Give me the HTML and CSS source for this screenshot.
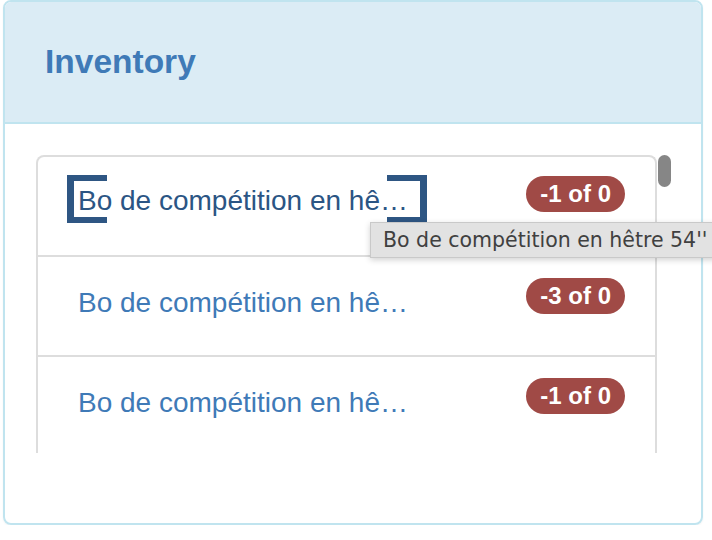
FILE: index.html
```html
<!DOCTYPE html>
<html lang="en">
<head>
    <meta charset="UTF-8">
    <meta name="viewport" content="width=device-width, initial-scale=1.0">
    <title>Inventory</title>
    <link rel="stylesheet" href="styles.css">
</head>
<body>
    <div class="panel">
        <div class="panel-heading">
            <h3 class="panel-title">Inventory</h3>
        </div>
        <div class="panel-body">
            <div class="scroller">
                <div class="list-group">
                    <div class="list-item">
                        <a class="item-name focused" href="#"><span class="label">Bo de compétition en hêtre 54''</span></a>
                        <span class="badge">-1 of 0</span>
                    </div>
                    <div class="list-item">
                        <a class="item-name" href="#"><span class="label">Bo de compétition en hêtre 54''</span></a>
                        <span class="badge">-3 of 0</span>
                    </div>
                    <div class="list-item">
                        <a class="item-name" href="#"><span class="label">Bo de compétition en hêtre 54''</span></a>
                        <span class="badge">-1 of 0</span>
                    </div>
                </div>
                <div class="track">
                    <div class="thumb"></div>
                </div>
            </div>
        </div>
        <div class="tooltip">Bo de compétition en hêtre 54''</div>
    </div>
</body>
</html>
```

FILE: styles.css
```css
html, body {
    overflow: hidden;
}
body {
    margin: 0;
    background-color: #fff;
    font-family: "Liberation Sans", Arial, sans-serif;
}
.panel {
    position: relative;
    box-sizing: border-box;
    width: 700px;
    height: 525px;
    margin-left: 3px;
    border: 2px solid #c0e4ef;
    border-radius: 8px;
    box-shadow: 0 1px 2px rgba(0, 0, 0, 0.05);
}
.panel-heading {
    display: flex;
    align-items: center;
    height: 120px;
    padding-left: 40px;
    background-color: #dbecf5;
    border-bottom: 2px solid #c0e4ef;
    border-radius: 6px 6px 0 0;
}
.panel-title {
    margin: 0;
    font-size: 33.5px;
    font-weight: bold;
    color: #3f7ab7;
}
.panel-body {
    padding: 31px 0 0 31px;
}
.scroller {
    display: flex;
    height: 298px;
    overflow: hidden;
}
.list-group {
    width: 621px;
    box-sizing: border-box;
    border: 2px solid #dddddd;
    border-bottom: none;
    border-radius: 8px 8px 0 0;
}
.list-item {
    box-sizing: border-box;
    display: flex;
    justify-content: space-between;
    align-items: flex-start;
    height: 98px;
    padding: 19px 30px 0 40px;
}
.list-item + .list-item {
    height: 100px;
    padding-top: 21px;
    border-top: 2px solid #dddddd;
}
.item-name {
    position: relative;
    display: block;
    margin-top: 9px;
    font-size: 28px;
    color: #3f7ab7;
    text-decoration: none;
}
.label {
    display: block;
    width: 334px;
    white-space: nowrap;
    overflow: hidden;
    text-overflow: ellipsis;
}
.focused {
    color: #2b5584;
}
.focused::before,
.focused::after {
    content: "";
    position: absolute;
    top: -10px;
    width: 33px;
    height: 36px;
    border: 6px solid #2e5683;
}
.focused::before {
    left: -11px;
    border-right: none;
    border-left-width: 7px;
}
.focused::after {
    right: -15px;
    border-left: none;
    border-right-width: 7px;
}
.badge {
    box-sizing: border-box;
    height: 36px;
    padding: 0 14px;
    line-height: 36px;
    border-radius: 18px;
    background-color: #a04a46;
    color: #fff;
    font-size: 24px;
    font-weight: bold;
    white-space: nowrap;
}
.track {
    width: 16px;
}
.thumb {
    width: 13px;
    height: 32px;
    margin-left: 1px;
    border-radius: 7px;
    background-color: #868686;
}
.tooltip {
    position: absolute;
    left: 365px;
    top: 220px;
    height: 34px;
    padding: 0 12px;
    line-height: 34px;
    background-color: #e2e2e2;
    border: 1px solid #c9c9c9;
    box-shadow: 0 2px 6px rgba(0, 0, 0, 0.18);
    font-family: "DejaVu Sans", sans-serif;
    font-size: 20.5px;
    color: #404040;
    white-space: nowrap;
}
```
